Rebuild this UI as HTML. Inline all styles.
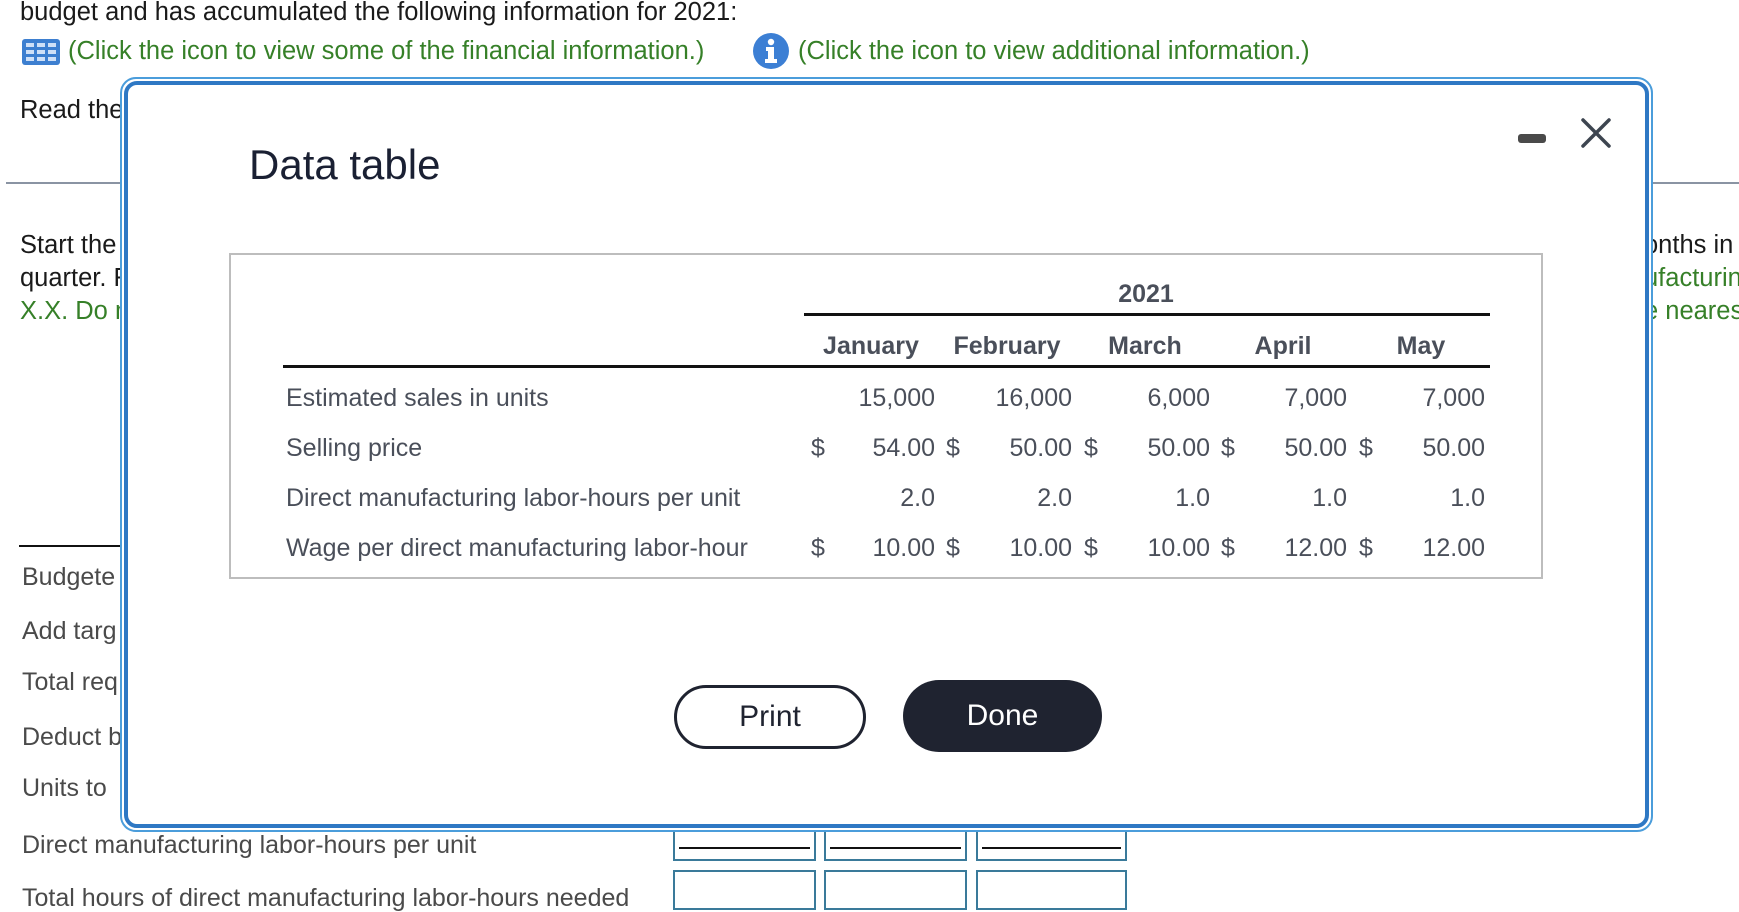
<!DOCTYPE html>
<html><head><meta charset="utf-8"><style>
*{margin:0;padding:0;box-sizing:border-box}
body{width:1739px;height:896px;overflow:hidden;background:#fff;font-family:"Liberation Sans",Arial,sans-serif;position:relative}
.a{position:absolute;white-space:nowrap;line-height:1}
.t{font-size:25.5px;color:#1a1a1a}
.g{color:#368028}
.r{font-size:25px;color:#4a4a4a}
.box{position:absolute;border:2px solid #3a7a9a;background:#fff}
.mt{font-size:25px;color:#4a4f5a}
.mh{font-size:25px;color:#4a4f5a;font-weight:bold;width:140px;text-align:center}
.v{position:absolute;font-size:25px;color:#4a4f5a;line-height:1;text-align:right;width:120px}
</style></head><body>
<div class="a t" style="left:20px;top:0px">budget and has accumulated the following information for 2021:</div>
<svg class="a" style="left:22px;top:39px" width="38" height="26" viewBox="0 0 38 26"><rect x="0" y="0" width="38" height="26" rx="3" fill="#3d7fd0"/><g fill="#cfe0f7"><rect x="4" y="4" width="8" height="4"/><rect x="15" y="4" width="8" height="4"/><rect x="26" y="4" width="8" height="4"/><rect x="4" y="11" width="8" height="4"/><rect x="15" y="11" width="8" height="4"/><rect x="26" y="11" width="8" height="4"/><rect x="4" y="18" width="8" height="4"/><rect x="15" y="18" width="8" height="4"/><rect x="26" y="18" width="8" height="4"/></g></svg>
<div class="a t g" style="left:68px;top:39px">(Click the icon to view some of the financial information.)</div>
<svg class="a" style="left:752px;top:32px" width="38" height="38" viewBox="0 0 38 38"><circle cx="19" cy="19" r="18" fill="#3c7fd4"/><circle cx="19" cy="10" r="3.2" fill="#fff"/><path d="M14 15h8v12h3v4H13v-4h3v-8h-2z" fill="#fff"/></svg>
<div class="a t g" style="left:798px;top:39px">(Click the icon to view additional information.)</div>
<div class="a t" style="left:20px;top:98px">Read the</div>
<div class="a" style="left:6px;top:182px;width:120px;height:2px;background:#8a94a3"></div>
<div class="a" style="left:1650px;top:182px;width:89px;height:2px;background:#8a94a3"></div>
<div class="a t" style="left:20px;top:233px">Start the</div>
<div class="a t" style="left:20px;top:266px">quarter. F</div>
<div class="a t g" style="left:20px;top:299px">X.X. Do n</div>
<div class="a t" style="left:1644px;top:233px">onths in</div>
<div class="a t g" style="left:1644px;top:266px">ufacturin</div>
<div class="a t g" style="left:1644px;top:299px">e neares</div>
<div class="a" style="left:19px;top:545px;width:110px;height:2px;background:#111"></div>
<div class="a r" style="left:22px;top:565px">Budgete</div>
<div class="a r" style="left:22px;top:619px">Add targ</div>
<div class="a r" style="left:22px;top:670px">Total req</div>
<div class="a r" style="left:22px;top:725px">Deduct b</div>
<div class="a r" style="left:22px;top:776px">Units to</div>
<div class="a r" style="left:22px;top:833px">Direct manufacturing labor-hours per unit</div>
<div class="a r" style="left:22px;top:886px">Total hours of direct manufacturing labor-hours needed</div>
<div class="box" style="left:673px;top:829px;width:143px;height:32px"><div style="position:absolute;left:4px;right:4px;top:16px;height:2px;background:#111"></div></div>
<div class="box" style="left:824px;top:829px;width:143px;height:32px"><div style="position:absolute;left:4px;right:4px;top:16px;height:2px;background:#111"></div></div>
<div class="box" style="left:976px;top:829px;width:151px;height:32px"><div style="position:absolute;left:4px;right:4px;top:16px;height:2px;background:#111"></div></div>
<div class="box" style="left:673px;top:870px;width:143px;height:40px"></div>
<div class="box" style="left:824px;top:870px;width:143px;height:40px"></div>
<div class="box" style="left:976px;top:870px;width:151px;height:40px"></div>

<div class="a" style="left:120px;top:77px;width:1533px;height:755px;border:2px solid #4b9ddb;border-radius:16px;background:#fff"></div>
<div class="a" style="left:124px;top:81px;width:1525px;height:747px;border:4px solid #2e78c4;border-radius:13px;background:#fff"></div>
<div class="a" style="left:249px;top:144px;font-size:42px;color:#1a2033">Data table</div>
<div class="a" style="left:1518px;top:134px;width:28px;height:9px;border-radius:3px;background:#4a4a4a"></div>
<svg class="a" style="left:1580px;top:117px" width="32" height="32" viewBox="0 0 32 32"><path d="M3 3L29 29M29 3L3 29" stroke="#3d4550" stroke-width="3.5" stroke-linecap="round"/></svg>

<div class="a" style="left:229px;top:253px;width:1314px;height:326px;border:2px solid #bdbdbd"></div>
<div class="a mh" style="left:1076px;top:282px">2021</div>
<div class="a" style="left:804px;top:313px;width:686px;height:3px;background:#111"></div>
<div class="a mh" style="left:801px;top:334px">January</div>
<div class="a mh" style="left:937px;top:334px">February</div>
<div class="a mh" style="left:1075px;top:334px">March</div>
<div class="a mh" style="left:1213px;top:334px">April</div>
<div class="a mh" style="left:1351px;top:334px">May</div>
<div class="a" style="left:283px;top:365px;width:1207px;height:3px;background:#111"></div>

<div class="a mt" style="left:286px;top:386px">Estimated sales in units</div>
<div class="a mt" style="left:286px;top:436px">Selling price</div>
<div class="a mt" style="left:286px;top:486px">Direct manufacturing labor-hours per unit</div>
<div class="a mt" style="left:286px;top:536px">Wage per direct manufacturing labor-hour</div>

<div class="v" style="left:815px;top:386px">15,000</div>
<div class="v" style="left:952px;top:386px">16,000</div>
<div class="v" style="left:1090px;top:386px">6,000</div>
<div class="v" style="left:1227px;top:386px">7,000</div>
<div class="v" style="left:1365px;top:386px">7,000</div>

<div class="a mt" style="left:811px;top:436px">$</div>
<div class="v" style="left:815px;top:436px">54.00</div>
<div class="a mt" style="left:946px;top:436px">$</div>
<div class="v" style="left:952px;top:436px">50.00</div>
<div class="a mt" style="left:1084px;top:436px">$</div>
<div class="v" style="left:1090px;top:436px">50.00</div>
<div class="a mt" style="left:1221px;top:436px">$</div>
<div class="v" style="left:1227px;top:436px">50.00</div>
<div class="a mt" style="left:1359px;top:436px">$</div>
<div class="v" style="left:1365px;top:436px">50.00</div>

<div class="v" style="left:815px;top:486px">2.0</div>
<div class="v" style="left:952px;top:486px">2.0</div>
<div class="v" style="left:1090px;top:486px">1.0</div>
<div class="v" style="left:1227px;top:486px">1.0</div>
<div class="v" style="left:1365px;top:486px">1.0</div>

<div class="a mt" style="left:811px;top:536px">$</div>
<div class="v" style="left:815px;top:536px">10.00</div>
<div class="a mt" style="left:946px;top:536px">$</div>
<div class="v" style="left:952px;top:536px">10.00</div>
<div class="a mt" style="left:1084px;top:536px">$</div>
<div class="v" style="left:1090px;top:536px">10.00</div>
<div class="a mt" style="left:1221px;top:536px">$</div>
<div class="v" style="left:1227px;top:536px">12.00</div>
<div class="a mt" style="left:1359px;top:536px">$</div>
<div class="v" style="left:1365px;top:536px">12.00</div>

<div class="a" style="left:674px;top:685px;width:192px;height:64px;border:3px solid #1f2330;border-radius:32px;font-size:30px;color:#1f2330;text-align:center;line-height:58px">Print</div>
<div class="a" style="left:903px;top:680px;width:199px;height:72px;background:#1f2330;border-radius:36px;font-size:30px;color:#fff;text-align:center;line-height:72px">Done</div>
</body></html>
